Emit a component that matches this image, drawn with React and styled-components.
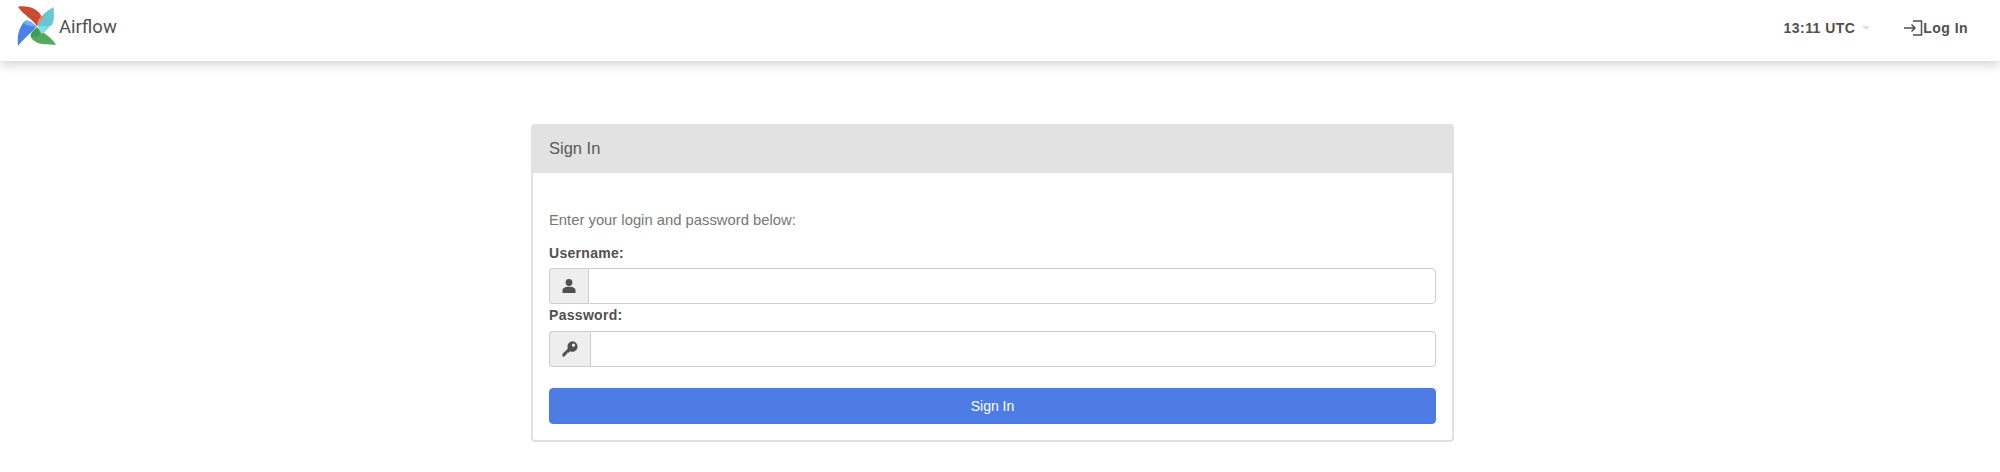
import React from "react";
import styled, { createGlobalStyle } from "styled-components";

const Global = createGlobalStyle`
  html, body { margin: 0; padding: 0; background: #fff; }
  body { font-family: "Liberation Sans", Arial, sans-serif; font-size: 14px; color: #51504f; }
  * { box-sizing: border-box; }
`;

const Page = styled.div`
  width: 2000px;
  height: 472px;
  overflow: hidden;
`;

const Navbar = styled.header`
  height: 61px;
  background: #fff;
  box-shadow: 0 2px 12px rgba(0, 0, 0, 0.22);
  display: flex;
  align-items: flex-start;
  justify-content: space-between;
  padding: 2px 32px 0 12px;
`;

const Brand = styled.div`
  display: flex;
  align-items: flex-start;
  gap: 0;
`;

const BrandName = styled.span`
  font-family: "Roboto", sans-serif;
  font-size: 18.5px;
  line-height: 22px;
  color: #51504f;
  margin-top: 14px;
  margin-left: -3px;
`;

const NavRight = styled.nav`
  display: flex;
  align-items: center;
  height: 51px;
`;

const Clock = styled.span`
  font-size: 14px;
  font-weight: 700;
  color: #51504f;
  letter-spacing: 0.45px;
`;

const Caret = styled.span`
  width: 0;
  height: 0;
  margin-left: 7px;
  margin-right: 34px;
  border-left: 4px solid transparent;
  border-right: 4px solid transparent;
  border-top: 4px solid #e3dce6;
`;

const LogIn = styled.span`
  display: flex;
  align-items: center;
  font-size: 14px;
  font-weight: 700;
  color: #51504f;
  letter-spacing: 0.45px;
`;

const Main = styled.main`
  padding-top: 63px;
  display: flex;
  justify-content: center;
`;

const Panel = styled.section`
  width: 923px;
  margin-left: -15px;
  height: 318px;
  border: 2px solid #e0e0e0;
  border-radius: 4px;
  background: #fff;
  display: flex;
  flex-direction: column;
`;

const PanelHeading = styled.div`
  height: 48px;
  margin: -1px -1px 0;
  padding: 0 17px 2px;
  background: #e2e2e2;
  border-radius: 3px 3px 0 0;
  display: flex;
  align-items: center;
  font-size: 16.5px;
  color: #5a5958;
`;

const PanelBody = styled.div`
  padding: 37px 16px 0;
`;

const Intro = styled.p`
  margin: 0 0 13px;
  font-size: 14.8px;
  line-height: 20px;
  color: #777675;
`;

const Label = styled.label`
  display: block;
  font-size: 14px;
  line-height: 20px;
  font-weight: 700;
  color: #51504f;
  letter-spacing: 0.3px;
  margin-bottom: ${(p) => p.$gap}px;
`;

const Group = styled.div`
  display: flex;
  height: 36px;
  margin-bottom: ${(p) => p.$after}px;
`;

const Addon = styled.span`
  width: ${(p) => p.$w}px;
  flex: none;
  background: #eee;
  border: 1px solid #ccc;
  border-right: 0;
  border-radius: 4px 0 0 4px;
  display: flex;
  align-items: center;
  justify-content: center;
`;

const Input = styled.input`
  flex: 1;
  min-width: 0;
  border: 1px solid #ccc;
  border-radius: 0 4px 4px 0;
  background: #fff;
  outline: none;
`;

const Submit = styled.button`
  width: 100%;
  height: 36px;
  border: 1px solid #4a7ae6;
  border-radius: 4px;
  background: #4e7ce5;
  color: #fff;
  font-family: inherit;
  font-size: 14px;
`;

const Pinwheel = () => (
  <svg width="50" height="48" viewBox="0 0 150 144">
    <path d="M125 15 C126 35 128 55 120 68 C108 80 90 76 76 72 C78 55 85 38 125 15Z" fill="#69c7d4" />
    <path d="M18 14 C45 10 76 18 88 42 L74 72 C62 50 35 40 18 14Z" fill="#cb4a33" />
    <path d="M88 42 L96 42 C90 55 84 64 74 72 C76 60 80 50 88 42Z" fill="#e8876a" />
    <path d="M132 128 C110 128 85 128 72 120 C58 112 54 102 56 98 L75 75 C92 95 115 100 132 128Z" fill="#53aa5a" />
    <path d="M18 132 C17 115 16 100 22 85 C28 68 36 58 44 55 L73 73 C60 92 40 105 18 132Z" fill="#4e80e8" />
    <path d="M34 62 C45 50 60 60 73 73 C60 72 45 72 34 62Z" fill="#70b2ef" />
    <path d="M77 72 C90 72 102 72 113 75 C105 85 95 92 88 96 C85 88 80 80 77 72Z" fill="#7fdfe8" />
    <path d="M75 76 C62 85 56 95 56 100 C65 108 75 105 84 98 C82 90 80 84 75 76Z" fill="#3f9c58" />
  </svg>
);

const LoginIcon = () => (
  <svg width="19" height="16" viewBox="0 0 19 16" fill="none" stroke="#51504f" strokeWidth="1.5">
    <path d="M0 8H11M7.5 4.5L11 8L7.5 11.5" />
    <path d="M9 1H17.5V15H9" />
  </svg>
);

const UserIcon = () => (
  <svg width="14" height="14" viewBox="0 0 14 14" fill="#51504f">
    <circle cx="7" cy="3.5" r="3.4" />
    <path d="M0.5 14V11.5C0.5 9 3 7.8 7 7.8S13.5 9 13.5 11.5V14Z" />
  </svg>
);

const KeyIcon = () => (
  <svg width="16" height="16" viewBox="0 0 16 16" fill="#51504f">
    <path d="M10.3 0.3a5.2 5.2 0 1 1-2.2 9.9L6.5 11.8H5v1.6H3.4V15L2 15.6H0.4V13L5.9 7.5A5.2 5.2 0 0 1 10.3 0.3Zm1.2 2.3a1.6 1.6 0 1 0 0 3.2 1.6 1.6 0 0 0 0-3.2Z" fillRule="evenodd" />
  </svg>
);

export default function App() {
  return (
    <Page>
      <Global />
      <Navbar>
        <Brand>
          <Pinwheel />
          <BrandName>Airflow</BrandName>
        </Brand>
        <NavRight>
          <Clock>13:11 UTC</Clock>
          <Caret />
          <LogIn>
            <LoginIcon />
            Log In
          </LogIn>
        </NavRight>
      </Navbar>
      <Main>
        <Panel>
          <PanelHeading>Sign In</PanelHeading>
          <PanelBody>
            <Intro>Enter your login and password below:</Intro>
            <Label $gap={5}>Username:</Label>
            <Group $after={1}>
              <Addon $w={39}><UserIcon /></Addon>
              <Input type="text" />
            </Group>
            <Label $gap={6}>Password:</Label>
            <Group $after={21}>
              <Addon $w={41}><KeyIcon /></Addon>
              <Input type="password" />
            </Group>
            <Submit>Sign In</Submit>
          </PanelBody>
        </Panel>
      </Main>
    </Page>
  );
}
